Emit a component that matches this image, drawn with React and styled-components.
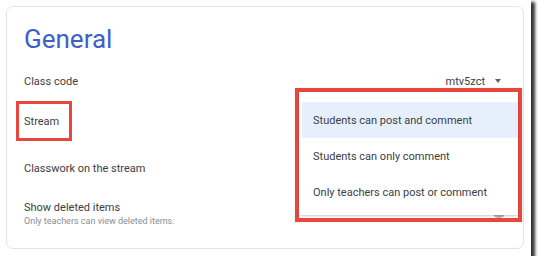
import React from "react";
import styled, { createGlobalStyle } from "styled-components";

const Global = createGlobalStyle`
  html, body { margin: 0; padding: 0; background: #ffffff; }
  body { font-family: Roboto, "Noto Sans", Arial, sans-serif; }
`;

const Frame = styled.div`
  width: 531px;
  height: 256px;
  background: #ffffff;
  box-shadow: 3px 3px 3px 1px rgba(0, 0, 0, 0.8);
  box-sizing: border-box;
  padding: 6px;
`;

const Card = styled.section`
  position: relative;
  box-sizing: border-box;
  width: 518px;
  height: 243px;
  border: 1px solid #e4e4e4;
  border-radius: 7px;
  padding: 17px 22px 0 17px;
  display: flex;
  flex-direction: column;
`;

const Title = styled.h1`
  margin: 0 0 12px 0;
  font-size: 26px;
  line-height: 30px;
  font-weight: 400;
  color: #3d5fc9;
`;

const Row = styled.div`
  height: ${(p) => p.$h}px;
  flex-shrink: 0;
  display: flex;
  align-items: center;
  justify-content: space-between;
`;

const Label = styled.span`
  font-size: 11px;
  color: #3c4043;
`;

const Highlight = styled.span`
  box-sizing: border-box;
  height: 40px;
  margin-left: -8px;
  border: 3px solid #e8473d;
  padding: 0 10px 0 5px;
  display: flex;
  align-items: center;
  font-size: 11px;
  color: #3c4043;
`;

const Stack = styled.div`
  display: flex;
  flex-direction: column;
  gap: 2px;
`;

const Sub = styled.span`
  font-size: 9px;
  color: #8a8e93;
`;

const CodeSelect = styled.div`
  display: flex;
  align-items: center;
  gap: 10px;
  font-size: 11px;
  color: #3c4043;
`;

const Caret = styled.span`
  width: 0;
  height: 0;
  border-left: 3.5px solid transparent;
  border-right: 3.5px solid transparent;
  border-top: 4px solid #5f6368;
`;

const Toggle = styled.span`
  width: 12px;
  height: 10px;
  border-radius: 5px;
  background: #b5b5b5;
  margin-right: -4px;
`;

const MenuOutline = styled.div`
  position: absolute;
  left: 288px;
  top: 81px;
  box-sizing: border-box;
  width: 227px;
  height: 134px;
  border: 4px solid #e8473d;
  box-shadow: 0 0 1px rgba(0, 0, 0, 0.2);
`;

const Menu = styled.ul`
  margin: 0;
  list-style: none;
  box-sizing: border-box;
  height: 123px;
  padding: 10px 0 5px 3px;
  background: #ffffff;
  box-shadow: 0 1px 2px rgba(0, 0, 0, 0.22);
`;

const Item = styled.li`
  height: 36px;
  display: flex;
  align-items: center;
  padding-left: 11px;
  font-size: 11px;
  color: #3c4043;
  background: ${(p) => (p.$active ? "#e6f0fd" : "transparent")};
`;

export default function App() {
  return (
    <>
      <Global />
      <Frame>
        <Card>
          <Title>General</Title>
          <Row $h={30}>
            <Label>Class code</Label>
            <CodeSelect>
              <span>mtv5zct</span>
              <Caret />
            </CodeSelect>
          </Row>
          <Row $h={50}>
            <Highlight>Stream</Highlight>
          </Row>
          <Row $h={44}>
            <Label>Classwork on the stream</Label>
          </Row>
          <Row $h={46}>
            <Stack>
              <Label>Show deleted items</Label>
              <Sub>Only teachers can view deleted items.</Sub>
            </Stack>
            <Toggle />
          </Row>
          <MenuOutline>
            <Menu>
              <Item $active>Students can post and comment</Item>
              <Item>Students can only comment</Item>
              <Item>Only teachers can post or comment</Item>
            </Menu>
          </MenuOutline>
        </Card>
      </Frame>
    </>
  );
}
